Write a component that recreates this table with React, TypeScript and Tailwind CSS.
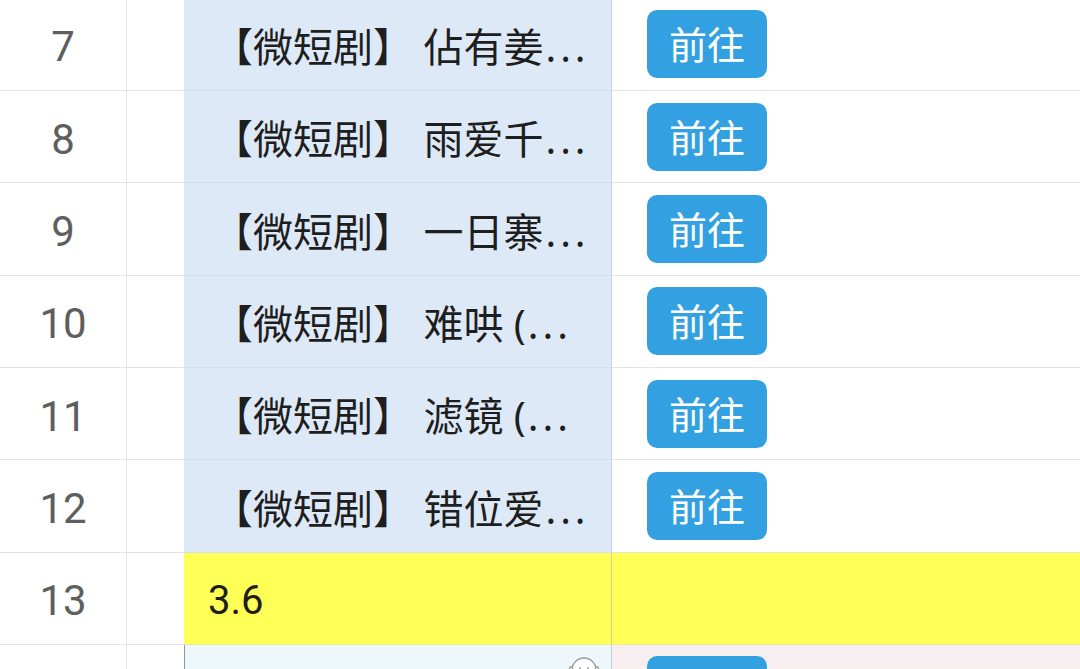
import React from "react";

const rows = [
  { n: 7, title: "佔有姜" },
  { n: 8, title: "雨爱千" },
  { n: 9, title: "一日寨" },
  { n: 10, title: "难哄 (" },
  { n: 11, title: "滤镜 (" },
  { n: 12, title: "错位爱" },
];

const font = { fontFamily: '"Noto Sans", "Noto Sans CJK SC", sans-serif' };

const GoButton = ({ label = "前往" }: { label?: string }) => (
  <button
    aria-label="前往"
    className="w-[120px] h-[68px] rounded-[10px] bg-[#33a1e1] text-white text-[38px] leading-none flex items-center justify-center"
  >
    {label}
  </button>
);

const NumCell = ({ n }: { n?: number }) => (
  <div className="w-[127px] shrink-0 border-r border-b border-[#e3e3e3] flex items-center justify-center pt-[5px] text-[42px] text-[#5e5e5e] font-[Roboto]">
    {n}
  </div>
);

const Row = ({ n, title }: { n: number; title: string }) => (
  <div className="flex h-[92.33px] shrink-0">
    <NumCell n={n} />
    <div className="w-[57px] shrink-0 border-b border-[#e3e3e3]" />
    <div className="w-[428px] shrink-0 bg-[#dde9f6] border-r border-b border-r-[#c7d0dc] border-b-[#d3dfed] flex items-center pl-[29px] pt-[5px] text-[40px] text-[#1e1e1e] whitespace-nowrap">
      【微短剧】 {title}
      <span className="tracking-[4px] ml-[2px]">...</span>
    </div>
    <div className="flex-1 border-b border-[#e3e3e3] flex items-center pl-[35px]">
      <GoButton />
    </div>
  </div>
);

const FaceIcon = () => (
  <svg width="34" height="30" viewBox="0 0 34 30" fill="none" stroke="#9a9a9a" strokeWidth="1.3">
    <circle cx="17" cy="16" r="12" fill="#ffffff" />
    <rect x="2.5" y="13" width="3" height="8" rx="1" fill="#ffffff" />
    <rect x="28.5" y="13" width="3" height="8" rx="1" fill="#ffffff" />
    <line x1="13" y1="13" x2="13" y2="17" />
    <line x1="21" y1="13" x2="21" y2="17" />
  </svg>
);

export default function App() {
  return (
    <div className="w-[1080px] h-[669px] overflow-hidden bg-white" style={font}>
      <div className="flex flex-col -mt-[1.3px]">
        {rows.map((r) => (
          <Row key={r.n} n={r.n} title={r.title} />
        ))}
        <div className="flex h-[92.33px] shrink-0">
          <NumCell n={13} />
          <div className="w-[57px] shrink-0 border-b border-[#e3e3e3]" />
          <div className="w-[428px] shrink-0 bg-[#ffff55] border-r border-b border-r-[#cfcfa8] border-b-[#e8e8a0] flex items-center pl-[24px] pt-[6px] text-[40px] text-[#1e1e1e] font-[Roboto]">
            3.6
          </div>
          <div className="flex-1 bg-[#ffff55] border-b border-[#e8e8a0]" />
        </div>
        <div className="flex h-[92px] shrink-0">
          <NumCell />
          <div className="w-[57px] shrink-0 border-b border-[#e3e3e3]" />
          <div className="w-[428px] shrink-0 bg-[#eef8fa] border-l border-r border-l-[#8e9aa0] border-r-[#c7d0dc] flex justify-end items-start pt-[9px] pr-[10px]">
            <FaceIcon />
          </div>
          <div className="flex-1 bg-[#f7efef] pl-[35px] pt-[11px]">
            <GoButton label="" />
          </div>
        </div>
      </div>
    </div>
  );
}
